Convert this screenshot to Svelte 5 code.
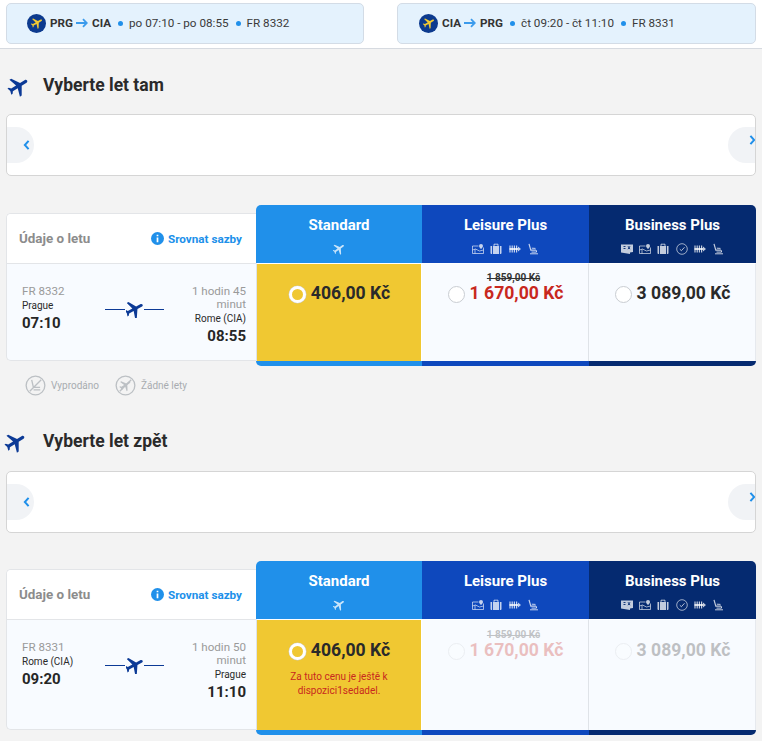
<script>
  const plane = "M21 16v-2l-8-5V3.5c0-.83-.67-1.5-1.5-1.5S10 2.67 10 3.5V9l-8 5v2l8-2.5V19l-2 1.5V22l3.5-1 3.5 1v-1.5L13 19v-5.5l8 2.5z";

  const chips = [
    { from: "PRG", to: "CIA", time: "po 07:10 - po 08:55", no: "FR 8332" },
    { from: "CIA", to: "PRG", time: "čt 09:20 - čt 11:10", no: "FR 8331" }
  ];

  const sections = [
    {
      title: "Vyberte let tam",
      no: "FR 8332",
      from: "Prague",
      dep: "07:10",
      dur: "1 hodin 45 minut",
      to: "Rome (CIA)",
      arr: "08:55",
      legend: true,
      dimmed: false,
      note: ""
    },
    {
      title: "Vyberte let zpět",
      no: "FR 8331",
      from: "Rome (CIA)",
      dep: "09:20",
      dur: "1 hodin 50 minut",
      to: "Prague",
      arr: "11:10",
      legend: false,
      dimmed: true,
      note: "Za tuto cenu je ještě k dispozici1sedadel."
    }
  ];
</script>

{#snippet icon(name)}
  <svg class="perk" viewBox="0 0 12 12" fill="currentColor" stroke="currentColor" stroke-width="1">
    {#if name === "plane"}
      <path stroke="none" transform="rotate(55 6 6) translate(-1.2 -1.2) scale(.6)" d={plane} />
    {:else if name === "ticket"}
      <path stroke="none" d="M0 1.500h12v7.500l-3 .6v1.400L0 9.500z" />
      <path stroke-width=".9" stroke="#052a70" d="M2.500 3.500h2M2.500 5.500h2M7 3.200l2 3M9 3.200l-2 3" />
    {:else if name === "map"}
      <path fill="none" stroke-width=".8" d="M.5 3h6M.5 3v7.500h11V4.500M3 10.500V6M.5 7l3-1 4 2 4-1" />
      <path stroke="none" d="M9 1a2 2 0 0 1 2 2c0 1-2 3-2 3S7 4 7 3a2 2 0 0 1 2-2z" />
    {:else if name === "bag"}
      <path stroke="none" d="M.5 3h1.600v8H1.400a.9.9 0 0 1-.9-.9zM3 3h6v8H3zM9.900 3h1.600v7.100a.9.9 0 0 1-.9.9h-.7z" />
      <path fill="none" stroke-width=".9" d="M4 3V1.200h4V3" />
    {:else if name === "clock"}
      <circle cx="6" cy="6" r="5.300" fill="none" stroke-width=".8" />
      <path fill="none" stroke-width=".9" d="M3.800 6.200 5.400 7.700 8.500 4.300" />
    {:else if name === "seats"}
      <path fill="none" stroke-width="1.200" d="M1 2.500v7M3.200 2.500v7M5.400 2.500v7M7.600 2.500v7" />
      <path stroke="none" d="M.5 5h8.500V3.500L12 6 9 8.500V7H.5z" />
    {:else if name === "seat"}
      <path fill="none" stroke-width="1.200" d="M2 .8l1.800 6.400H9" />
      <path fill="none" stroke-width="1" d="M4.800 5.200 8.500 5.400M3 10.800h8M9.500 7.300v1.800H4.500" />
    {/if}
  </svg>
{/snippet}

{#snippet fare(name, perks, tone, price, oldPrice, selected, dimmed, note)}
  <div class="fare {tone}">
    <div class="fare-head">
      <div class="fare-name">{name}</div>
      <div class="perks">
        {#each perks as p}
          {@render icon(p)}
        {/each}
      </div>
    </div>
    <div class="fare-body" class:selected>
      <div class="fare-price" class:dimmed>
        <div class="old">{oldPrice}</div>
        <div class="price-row">
          <span class="radio"></span>
          <span class="price" class:sale={oldPrice !== ""}>{price}</span>
        </div>
      </div>
      {#if note}
        <div class="note">{note}</div>
      {/if}
    </div>
    <div class="fare-bar"></div>
  </div>
{/snippet}

<header class="top">
  {#each chips as c}
    <div class="chip">
      <span class="chip-logo">
        <svg viewBox="0 0 24 24" width="14" height="14"><path fill="#f1c933" transform="rotate(60 12 12)" d={plane} /></svg>
      </span>
      <b>{c.from}</b>
      <svg class="arrow" viewBox="0 0 12 10" width="12" height="10"><path fill="none" stroke="#3b9bec" stroke-width="1.800" d="M0 5h10.500M7 1.200 10.800 5 7 8.800" /></svg>
      <b>{c.to}</b>
      <i class="dot"></i>
      <span>{c.time}</span>
      <i class="dot"></i>
      <span>{c.no}</span>
    </div>
  {/each}
</header>

<main class="page">
  {#each sections as s}
    <section class="section">
      <div class="title">
        <svg viewBox="0 0 24 24" width="25" height="25"><path fill="#0c3a96" transform="rotate(58 12 12)" d={plane} /></svg>
        <h2>{s.title}</h2>
      </div>

      <div class="carousel">
        <div class="nav prev">
          <svg viewBox="0 0 8 12" width="7" height="10"><path fill="none" stroke="#2090ea" stroke-width="2.400" d="M6.500 1 2 6l4.500 5" /></svg>
        </div>
        <div class="nav next">
          <svg viewBox="0 0 8 12" width="7" height="10"><path fill="none" stroke="#2090ea" stroke-width="2.400" d="M1.500 1 6 6l-4.500 5" /></svg>
        </div>
      </div>

      <div class="table">
        <div class="info">
          <div class="info-head">
            <span class="info-title">Údaje o letu</span>
            <span class="compare">
              <svg viewBox="0 0 12 12" width="13" height="13"><circle cx="6" cy="6" r="6" fill="#2090ea" /><path fill="#fff" d="M5.200 5h1.600v4.500H5.200zM5.200 2.500h1.600V4H5.200z" /></svg>
              Srovnat sazby
            </span>
          </div>
          <div class="info-body">
            <div class="side">
              <div class="muted">{s.no}</div>
              <div class="place">{s.from}</div>
              <div class="time">{s.dep}</div>
            </div>
            <div class="route">
              <i class="line"></i>
              <svg viewBox="3 3 18 18" width="17" height="17"><path fill="#0c3a96" transform="rotate(62 12 12)" d={plane} /></svg>
              <i class="line"></i>
            </div>
            <div class="side end">
              <div class="muted">{s.dur}</div>
              <div class="place">{s.to}</div>
              <div class="time">{s.arr}</div>
            </div>
          </div>
        </div>
        {@render fare("Standard", ["plane"], "std", "406,00 Kč", "", true, false, s.note)}
        {@render fare("Leisure Plus", ["map", "bag", "seats", "seat"], "lei", "1 670,00 Kč", "1 859,00 Kč", false, s.dimmed, "")}
        {@render fare("Business Plus", ["ticket", "map", "bag", "clock", "seats", "seat"], "bus", "3 089,00 Kč", "", false, s.dimmed, "")}
      </div>

      {#if s.legend}
        <div class="legend">
          <span class="legend-item">
            <svg viewBox="0 0 22 22" width="21" height="21" fill="none" stroke="#bcc0c4" stroke-width="1.400">
              <circle cx="11" cy="11" r="9.800" />
              <path d="M7 5l1.800 8h7M9 15.500h7M5 17 17 5" />
            </svg>
            Vyprodáno
          </span>
          <span class="legend-item">
            <svg viewBox="0 0 22 22" width="21" height="21" fill="none" stroke="#bcc0c4" stroke-width="1.400">
              <circle cx="11" cy="11" r="9.800" />
              <path d="M5 17 17 5" />
              <path fill="#bcc0c4" stroke="none" transform="rotate(55 11 11) translate(3.500 3.500) scale(.62)" d={plane} />
            </svg>
            Žádné lety
          </span>
        </div>
      {/if}
    </section>
  {/each}
</main>

<style>
  :global(body) {
    background: #f3f3f3;
    font-family: Roboto, "Liberation Sans", sans-serif;
    color: #2a2a2a;
    overflow: hidden;
  }

  .top {
    height: 49px;
    box-sizing: border-box;
    background: #fff;
    border-bottom: 1px solid #d6dae0;
    padding: 3px 6px 0;
    display: flex;
    justify-content: space-between;
    align-items: flex-start;
  }

  .chip {
    width: 358px;
    height: 41px;
    box-sizing: border-box;
    background: #e4f2fd;
    border: 1px solid #d3dce6;
    border-radius: 5px;
    padding-left: 20px;
    padding-bottom: 1px;
    display: flex;
    align-items: center;
    font-size: 11.700px;
    color: #3a3a3a;
  }

  .chip:last-child {
    width: 359px;
    padding-left: 21px;
  }

  .chip b {
    font-weight: 700;
    color: #333;
  }

  .chip-logo {
    width: 19px;
    height: 19px;
    border-radius: 50%;
    background: #0c3a8e;
    display: flex;
    align-items: center;
    justify-content: center;
    margin-right: 4px;
  }

  .arrow {
    margin: 0 4px 0 3px;
  }

  .dot {
    width: 5px;
    height: 5px;
    border-radius: 50%;
    background: #2090ea;
    margin: 0 6px 0 7px;
  }

  .page {
    padding: 0 6px;
  }

  .section {
    padding-top: 25px;
  }

  .section:last-child {
    padding-top: 34px;
  }

  .title {
    height: 22px;
    display: flex;
    align-items: center;
  }

  .title svg {
    margin: 3px 12px 0 0;
    flex: none;
  }

  .section:last-child .title svg {
    margin: 3px 15px 0 -3px;
  }

  .title h2 {
    margin: 0;
    font-size: 17.500px;
    font-weight: 700;
    color: #2a2a2a;
  }

  .carousel {
    position: relative;
    height: 62px;
    margin-top: 18px;
    box-sizing: border-box;
    background: #fff;
    border: 1px solid #d5d5d5;
    border-radius: 5px;
    overflow: hidden;
  }

  .section:last-child .carousel {
    margin-top: 19px;
  }

  .nav {
    position: absolute;
    top: 12px;
    width: 27px;
    height: 36px;
    background: #f1f3f6;
    display: flex;
    align-items: center;
  }

  .prev {
    left: 0;
    border-radius: 0 18px 18px 0;
    justify-content: flex-end;
    padding-right: 4px;
    box-sizing: border-box;
  }

  .next {
    right: 0;
    width: 28px;
    border-radius: 18px 0 0 18px;
    justify-content: flex-end;
    padding-bottom: 10px;
    box-sizing: border-box;
    margin-right: -1px;
  }

  .table {
    display: grid;
    grid-template-columns: 250px 166px 167px 167px;
    margin-top: 29px;
  }

  .section:last-child .table {
    margin-top: 28px;
  }

  .info {
    margin: 8px 0 5px;
    background: #f8fbff;
    border: 1px solid #e3e5e8;
    border-right: 0;
    border-radius: 5px 0 0 5px;
    box-sizing: border-box;
    display: flex;
    flex-direction: column;
    overflow: hidden;
  }

  .info-head {
    height: 50px;
    flex: none;
    background: #fff;
    border-bottom: 1px solid #e3e5e8;
    display: flex;
    align-items: center;
    justify-content: space-between;
    padding: 0 14px 0 12px;
    box-sizing: border-box;
  }

  .info-title {
    font-size: 13.400px;
    font-weight: 700;
    color: #8c8c8c;
  }

  .compare {
    display: flex;
    align-items: center;
    gap: 4px;
    font-size: 11.700px;
    font-weight: 700;
    color: #2090ea;
  }

  .info-body {
    flex: 1;
    display: flex;
    justify-content: space-between;
    padding: 21px 10px 10px 15px;
  }

  .side {
    width: 62px;
  }

  .side.end {
    text-align: right;
  }

  .muted {
    font-size: 11.600px;
    line-height: 13px;
    color: #9a9a9a;
  }

  .place {
    font-size: 10px;
    line-height: 14px;
    margin-top: 1px;
    color: #2a2a2a;
    white-space: nowrap;
  }

  .time {
    font-size: 15px;
    font-weight: 700;
    line-height: 20px;
    color: #262626;
  }

  .route {
    display: flex;
    align-items: center;
    height: 18px;
    margin-top: 15px;
    gap: 1px;
  }

  .line {
    width: 20px;
    height: 1px;
    background: #0c3a96;
  }

  .fare {
    display: flex;
    flex-direction: column;
  }

  .std .fare-head {
    border-radius: 5px 0 0 0;
  }

  .bus .fare-head {
    border-radius: 0 5px 0 0;
  }

  .std .fare-bar {
    border-radius: 0 0 0 5px;
  }

  .bus .fare-bar {
    border-radius: 0 0 5px 0;
  }

  .fare-head {
    height: 58px;
    flex: none;
    color: #fff;
    text-align: center;
    box-sizing: border-box;
    padding-top: 11px;
  }

  .std .fare-head,
  .std .fare-bar {
    background: #2090ea;
  }

  .lei .fare-head,
  .lei .fare-bar {
    background: #0e48bd;
  }

  .bus .fare-head,
  .bus .fare-bar {
    background: #052a70;
  }

  .fare-bar {
    height: 5px;
    flex: none;
  }

  .fare-name {
    font-size: 15px;
    font-weight: 700;
    line-height: 18px;
  }

  .perks {
    display: flex;
    justify-content: center;
    gap: 6.300px;
    margin-top: 9px;
    color: rgba(255, 255, 255, 0.76);
  }

  .perk {
    width: 12px;
    height: 12px;
    flex: none;
  }

  .fare-body {
    flex: 1;
    background: #f8fbff;
    border-right: 1px solid #dfe3e8;
    border-top: 1px solid #fff;
    box-sizing: border-box;
    padding-top: 7px;
    min-height: 98px;
  }

  .section:last-child .fare-body {
    min-height: 111px;
    padding-top: 8px;
  }

  .fare-body.selected {
    background: #f0c832;
    border-left: 1px solid #dfe3e8;
    border-right-color: #fff;
  }

  .bus .fare-body {
    border-right-color: #e6e9ee;
  }

  .fare-price.dimmed {
    opacity: 0.28;
  }

  .old {
    height: 13px;
    padding-left: 17px;
    font-size: 10px;
    line-height: 13px;
    font-weight: 700;
    text-align: center;
    color: #333;
    text-decoration: line-through;
  }

  .price-row {
    display: flex;
    justify-content: center;
    align-items: center;
    gap: 5px;
    height: 20px;
    margin-top: -1px;
    padding-left: 1px;
  }

  .radio {
    width: 17px;
    height: 17px;
    box-sizing: border-box;
    border-radius: 50%;
    background: #fff;
    border: 1px solid #c9cdd2;
    margin-top: 3px;
  }

  .selected .radio {
    background: #f0c832;
    border: 3px solid #fff;
    box-shadow: 0 0 0 0.500px #c9c9c9;
  }

  .price {
    font-size: 17.600px;
    font-weight: 700;
    color: #2a2a2a;
  }

  .price.sale {
    color: #c8281e;
  }

  .note {
    margin: 10px auto 0;
    width: 125px;
    font-size: 10px;
    line-height: 14px;
    text-align: center;
    color: #c8281e;
  }

  .legend {
    display: flex;
    gap: 16px;
    padding: 8px 0 0 19px;
    height: 22px;
  }

  .legend-item {
    display: flex;
    align-items: center;
    gap: 5px;
    font-size: 10px;
    color: #a8acb0;
  }
</style>
